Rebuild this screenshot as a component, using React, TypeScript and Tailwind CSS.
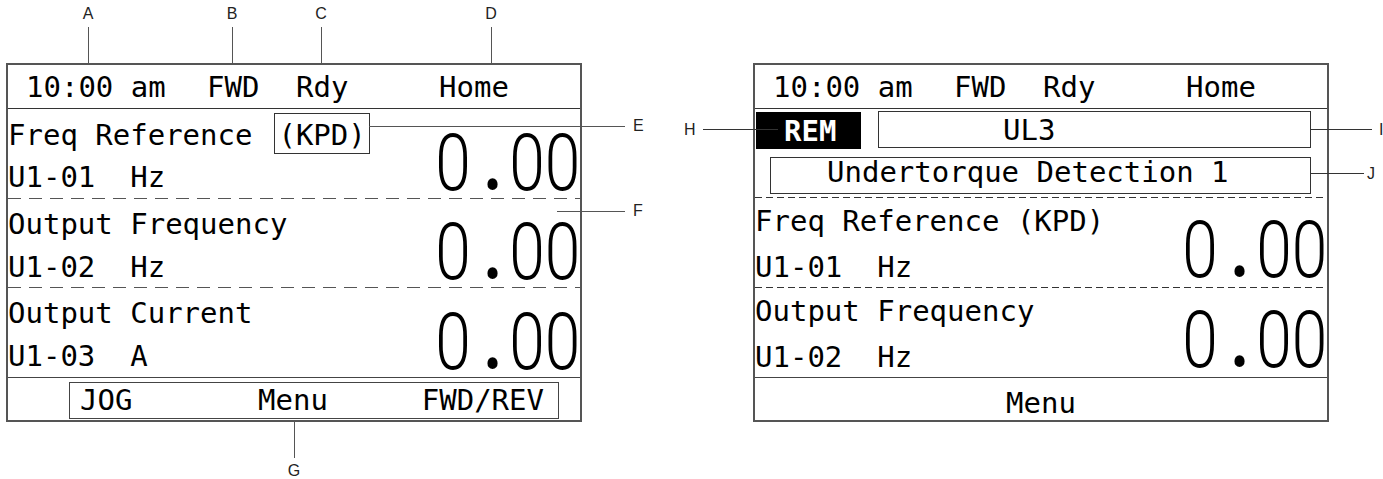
import React from "react";

const Big = ({ right }: { right?: boolean }) => (
  <div
    className={
      right
        ? "self-end origin-right scale-x-[0.8] whitespace-nowrap font-['Roboto',sans-serif] text-[80px] font-light leading-[74px]"
        : "self-end origin-right scale-x-[0.8] whitespace-nowrap font-['Roboto',sans-serif] text-[80px] font-light leading-[70px]"
    }
  >
    <span>0</span>
    <span className="ml-[16px] mr-[9px] font-bold">.</span>
    <span>00</span>
  </div>
);

const Header = () => (
  <div className="flex h-[44px] border-b border-[#333] pl-[18px] pt-[1px] leading-[43px] whitespace-pre">
    <span className="w-[181px]">10:00 am</span>
    <span className="w-[89px]">FWD</span>
    <span className="w-[143px]">Rdy</span>
    <span>Home</span>
  </div>
);

const DashWide = () => (
  <div className="h-px bg-[repeating-linear-gradient(90deg,#555_0_13px,transparent_13px_21px)]" />
);

const DashFine = () => (
  <div className="h-px bg-[repeating-linear-gradient(90deg,#333_0_7px,transparent_7px_11px)]" />
);

const leftRows = [
  { name: "Freq Reference", code: "U1-01  Hz", kpd: true, h: "h-[89px]" },
  { name: "Output Frequency", code: "U1-02  Hz", kpd: false, h: "h-[88px]" },
  { name: "Output Current", code: "U1-03  A", kpd: false, h: "h-[89px]" },
];

const LeftPanel = () => (
  <div className="w-[576px] border-2 border-[#555]">
    <Header />
    {leftRows.map((r, i) => (
      <React.Fragment key={r.code}>
        {i > 0 && <DashWide />}
        <div className={`flex justify-between pt-[4px] ${r.h}`}>
          <div className="leading-[43px] whitespace-pre">
            <div className="flex h-[43px] items-baseline">
              <span>{r.name}</span>
              {r.kpd && (
                <span className="ml-[22px] border border-[#333] px-[3px] pt-[5px] pb-[1px] leading-[33px]">
                  (KPD)
                </span>
              )}
            </div>
            <div>{r.code}</div>
          </div>
          <Big />
        </div>
      </React.Fragment>
    ))}
    <div className="h-[43px] border-t border-[#444]">
      <div className="ml-[61px] mt-[4px] flex h-[37px] w-[490px] border border-[#444] pl-[10px] leading-[35px]">
        <span className="w-[178px]">JOG</span>
        <span>Menu</span>
        <span className="ml-auto pr-[14px]">FWD/REV</span>
      </div>
    </div>
  </div>
);

const RightPanel = () => (
  <div className="w-[576px] border-2 border-[#555]">
    <Header />
    <div className="h-[88px] pt-[2px]">
      <div className="flex items-start">
        <div className="ml-[1px] mt-[1px] h-[37px] w-[105px] bg-black pl-[28px] pt-[2px] font-bold leading-[35px] text-white">
          REM
        </div>
        <div className="ml-[17px] h-[37px] w-[433px] border border-[#333] pl-[124px] pt-[1px] leading-[34px]">
          UL3
        </div>
      </div>
      <div className="ml-[15px] mt-[8px] h-[37px] w-[541px] border border-[#333] pl-[56px] leading-[29px] whitespace-pre">
        Undertorque Detection 1
      </div>
    </div>
    <DashFine />
    <div className="flex h-[89px] justify-between">
      <div className="leading-[46px] whitespace-pre">
        <div>Freq Reference (KPD)</div>
        <div>U1-01  Hz</div>
      </div>
      <Big right />
    </div>
    <DashFine />
    <div className="flex h-[89px] justify-between">
      <div className="leading-[46px] whitespace-pre">
        <div>Output Frequency</div>
        <div>U1-02  Hz</div>
      </div>
      <Big right />
    </div>
    <div className="h-[43px] border-t border-[#444] pt-[4px] text-center leading-[42px]">Menu</div>
  </div>
);

const Tag = ({ c, cls }: { c: string; cls: string }) => (
  <div className={`absolute font-['Liberation_Sans',Arial,sans-serif] text-[16px] leading-none text-[#222] ${cls}`}>{c}</div>
);

export default function App() {
  return (
    <div className="relative h-[479px] w-[1383px] overflow-hidden bg-white font-['DejaVu_Sans_Mono',monospace] text-[29px] text-black">
      <div className="flex gap-[171px] pl-[6px] pt-[63px]">
        <LeftPanel />
        <RightPanel />
      </div>

      {/* callouts */}
      <Tag c="A" cls="left-[88px] top-[6px] -translate-x-1/2" />
      <Tag c="B" cls="left-[232px] top-[6px] -translate-x-1/2" />
      <Tag c="C" cls="left-[321px] top-[6px] -translate-x-1/2" />
      <Tag c="D" cls="left-[491px] top-[6px] -translate-x-1/2" />
      <div className="absolute left-[88px] top-[27px] h-[37px] w-px bg-[#555]" />
      <div className="absolute left-[232px] top-[27px] h-[37px] w-px bg-[#555]" />
      <div className="absolute left-[321px] top-[27px] h-[37px] w-px bg-[#555]" />
      <div className="absolute left-[491px] top-[27px] h-[37px] w-px bg-[#555]" />

      <div className="absolute left-[369px] top-[126px] h-px w-[256px] bg-[#555]" />
      <Tag c="E" cls="left-[633px] top-[118px]" />
      <div className="absolute left-[557px] top-[211px] h-px w-[68px] bg-[#555]" />
      <Tag c="F" cls="left-[633px] top-[203px]" />
      <div className="absolute left-[294px] top-[422px] h-[36px] w-px bg-[#555]" />
      <Tag c="G" cls="left-[294px] top-[463px] -translate-x-1/2" />

      <Tag c="H" cls="left-[684px] top-[122px]" />
      <div className="absolute left-[703px] top-[129px] h-px w-[75px] bg-[#333]" />
      <div className="absolute left-[1311px] top-[129px] h-px w-[61px] bg-[#333]" />
      <Tag c="I" cls="left-[1379px] top-[122px]" />
      <div className="absolute left-[1311px] top-[173px] h-px w-[53px] bg-[#333]" />
      <Tag c="J" cls="left-[1367px] top-[166px]" />
    </div>
  );
}
